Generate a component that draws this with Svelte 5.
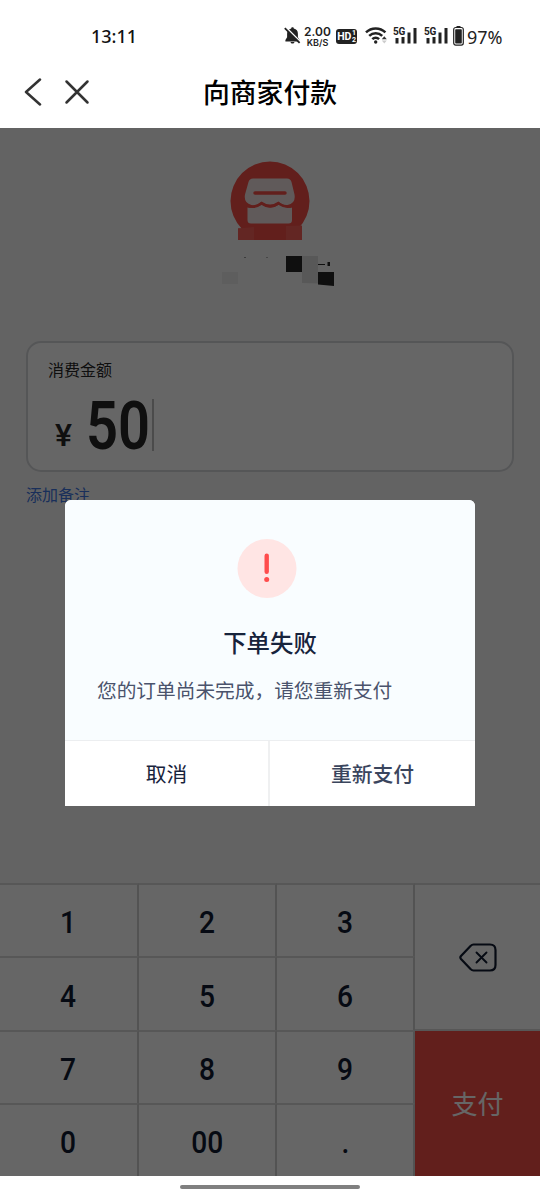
<script lang="ts">
	const keys = ['1', '2', '3', '4', '5', '6', '7', '8', '9', '0', '00', '.'];
	const networks = [1, 2];

	let amount = $state('50');
	let showDialog = $state(true);

	function press(key: string) {
		if (key === '.' && amount.includes('.')) return;
		amount += key;
	}

	function erase() {
		amount = amount.slice(0, -1);
	}
</script>

<div class="phone">
	<div class="status">
		<span class="time">13:11</span>
		<div class="indicators">
			<svg class="bell" width="17" height="19" viewBox="0 0 17 19">
				<path d="M8.5 1.2c.8 0 1.3.5 1.3 1.3 2.7.6 4.1 2.6 4.1 5.2v3.5l1.7 2.7v1.5H1.4v-1.5l1.7-2.7V7.7c0-2.6 1.4-4.6 4.1-5.2 0-.8.5-1.3 1.3-1.3zM6.5 16h4c-.3 1-1 1.6-2 1.6s-1.7-.6-2-1.6z" fill="#222" />
				<path d="M2 1.4l14.5 14.4" stroke="#fff" stroke-width="1.5" />
				<path d="M.8 2.2l14.8 14.7" stroke="#222" stroke-width="1.8" />
			</svg>
			<div class="speed">
				<span class="rate">2.00</span>
				<span class="unit">KB/S</span>
			</div>
			<div class="hd">
				<span>HD</span>
				<span class="sims"><i>1</i><i>2</i></span>
			</div>
			<svg class="wifi" width="23" height="19" viewBox="0 0 23 19">
				<g fill="none" stroke="#222" stroke-width="2.5">
					<path d="M1 6.4c5.4-5.2 14-5.2 19.4 0" />
					<path d="M4.2 9.9c3.7-3.5 9.3-3.5 13 0" />
					<path d="M7.3 13.2c2-1.9 4.8-1.9 6.8 0" />
				</g>
				<circle cx="10.7" cy="16" r="1.7" fill="#222" />
				<path d="M16.8 13.2l2.5-3 2.5 3z" fill="#333" />
				<path d="M16.8 14.5h5l-2.5 3z" fill="#ccc" />
			</svg>
			{#each networks as network (network)}
				<div class="signal">
					<svg width="25" height="19" viewBox="0 0 25 19">
						<path d="M2.5 12h3v5.5h-3zM8.5 11h3v6.5h-3zM14.5 6.5h3v11h-3zM20.5 2h3v15.5h-3z" fill="#222" />
					</svg>
					<span>5G</span>
				</div>
			{/each}
			<svg class="battery" width="11" height="20" viewBox="0 0 11 20">
				<path d="M3.5.5h4" stroke="#222" stroke-width="1.2" />
				<rect x=".7" y="1.5" width="9.6" height="17.6" rx="2" fill="none" stroke="#222" stroke-width="1.2" />
				<rect x="2.2" y="3.2" width="6.6" height="14.2" rx=".7" fill="#222" />
			</svg>
			<span class="percent">97%</span>
		</div>
	</div>

	<header>
		<button aria-label="返回">
			<svg width="18" height="28" viewBox="0 0 18 28">
				<path d="M16 1.5L2 14l14 12.5" />
			</svg>
		</button>
		<button aria-label="关闭">
			<svg width="26" height="26" viewBox="0 0 26 26">
				<path d="M2.5 2.5l21 21M23.5 2.5l-21 21" />
			</svg>
		</button>
		<h1>向商家付款</h1>
	</header>

	<main>
		<div class="merchant">
			<svg width="116" height="130" viewBox="0 0 116 130">
				<path d="M22 70.9A39.5 39.5 0 1 1 78 70.9z" fill="#f54e46" />
				<path d="M18 70.5h64V82H18z" fill="#f54e46" />
				<path d="M18 70.5l16-1.5v13H18zM66 68l16-.5V82H66z" fill="#f76058" />
				<path d="M33 20.5h34q3.5 0 4.5 3.5l3 12.5q1.500 9-7 10.500-5 .5-9-3.500-8.500 6-17 0-5 4.500-10 3.500-8-2-6.500-10.500l3.500-12.500Q29.500 20.500 33 20.500z" fill="#f0e2e2" />
				<path d="M27.500 49.500q7 1 14.500-3 8.500 6 17 0 6.500 4 13 3v12.500q0 3.500-3.500 3.500H31q-3.500 0-3.500-3.500z" fill="#f0e2e2" />
				<path d="M27 47.500q7 3.500 14.500-2 8.500 6 17 0 7.500 5 14 2" fill="none" stroke="#f54e46" stroke-width="2.500" />
				<path d="M35 35h30" stroke="#f54e46" stroke-width="3.500" stroke-linecap="round" />
				<path d="M2 114h16v12H2z" fill="#eaeaea" />
				<path d="M66 98h16v16H66z" fill="#262626" />
				<path d="M82 98h16v27.500l-16-.5z" fill="#dcdcdc" />
				<path d="M98 114h16v14L98 126.500z" fill="#262626" />
				<path d="M98 106h7v1h-7zM107.500 104h2.500v4h-2.500z" fill="#262626" />
				<path d="M24 99h2v1h-2zM46 99h2v.7h-2z" fill="#999" />
			</svg>
		</div>

		<section class="card">
			<label for="amount">消费金额</label>
			<div class="amount" id="amount">
				<span class="yen">¥</span>
				<span class="value">{amount}</span>
				<span class="caret"></span>
			</div>
		</section>
		<a class="remark" href="#remark">添加备注</a>

		<div class="keyboard">
			<div class="digits">
				{#each keys as key (key)}
					<button onclick={() => press(key)}><span>{key}</span></button>
				{/each}
			</div>
			<div class="actions">
				<button class="erase" aria-label="删除" onclick={erase}>
					<svg width="38" height="29" viewBox="0 0 38 29" fill="none" stroke="#101b30" stroke-linecap="round" stroke-linejoin="round">
						<path d="M14.5 1.5H31q5.500 0 5.500 5.500v15q0 5.500-5.500 5.500H14.500q-1.500 0-3-1.500L2 16q-1.300-1.500 0-3L11.500 3q1.500-1.500 3-1.500z" stroke-width="2.2" />
						<path d="M17.5 9.5l10 10M27.5 9.5l-10 10" stroke-width="1.9" />
					</svg>
				</button>
				<button class="pay" onclick={() => (showDialog = true)}>支付</button>
			</div>
		</div>

		{#if showDialog}
			<div class="mask">
				<div class="dialog" role="alertdialog">
					<div class="body">
						<svg width="60" height="60" viewBox="0 0 60 60">
							<circle cx="30" cy="30.5" r="29.5" fill="#ffe5e4" />
							<path d="M29.7 17.8v16" stroke="#ff4c4c" stroke-width="4.4" stroke-linecap="round" />
							<circle cx="29.7" cy="41.5" r="2.5" fill="#ff4c4c" />
						</svg>
						<h2>下单失败</h2>
						<p>您的订单尚未完成，请您重新支付</p>
					</div>
					<div class="buttons">
						<button onclick={() => (showDialog = false)}>取消</button>
						<button class="retry">重新支付</button>
					</div>
				</div>
			</div>
		{/if}
	</main>

	<footer><span></span></footer>
</div>

<style>
	:global(body) {
		margin: 0;
		background: #fff;
	}

	.phone {
		display: flex;
		flex-direction: column;
		width: 540px;
		height: 1200px;
		overflow: hidden;
		background: #fff;
		font-family: 'Noto Sans CJK SC', sans-serif;
	}

	button {
		padding: 0;
		border: 0;
		background: none;
		font: inherit;
		color: inherit;
	}

	svg {
		display: block;
		flex: none;
	}

	.status {
		display: flex;
		justify-content: space-between;
		box-sizing: border-box;
		height: 56px;
		padding: 26px 37px 0 91px;
		font-family: Inter, sans-serif;
		color: #222;
	}

	.time {
		font-family: 'Noto Sans', sans-serif;
		font-size: 18px;
		line-height: 20px;
		font-weight: 500;
		color: #111;
	}

	.indicators {
		display: flex;
		align-items: flex-start;
		white-space: nowrap;
	}

	.bell {
		margin-left: -1px;
	}

	.speed {
		display: flex;
		flex-direction: column;
		align-items: center;
		width: 27px;
		margin: 0 5px 0 3px;
		font-weight: 600;
	}

	.rate {
		font-size: 12px;
		line-height: 12px;
	}

	.unit {
		font-size: 9px;
		line-height: 9px;
	}

	.hd {
		display: flex;
		align-items: center;
		justify-content: center;
		gap: 1px;
		width: 21px;
		height: 15px;
		margin: 3px 8px 0 0;
		border-radius: 3px;
		background: #222;
		color: #fff;
		font-family: Roboto, sans-serif;
		font-size: 10.5px;
		font-weight: 700;
		letter-spacing: -0.3px;
	}

	.sims {
		display: flex;
		flex-direction: column;
		font-size: 7px;
		line-height: 6.5px;
	}

	.sims i {
		font-style: normal;
	}

	.signal {
		position: relative;
		width: 25px;
		margin-left: 6px;
	}

	.wifi {
		margin-right: -1px;
	}

	.signal span {
		position: absolute;
		top: 1px;
		left: 0;
		font-family: Roboto, sans-serif;
		font-size: 10px;
		line-height: 9px;
		font-weight: 700;
		letter-spacing: -0.3px;
	}

	.battery {
		margin: 0 3px 0 4px;
	}

	.percent {
		width: 36px;
		font-family: 'Noto Sans', sans-serif;
		font-size: 18px;
		line-height: 22px;
	}

	header {
		position: relative;
		display: flex;
		align-items: center;
		gap: 22px;
		height: 72px;
		padding-left: 24px;
	}

	header svg {
		fill: none;
		stroke: #333;
		stroke-width: 2.5;
		stroke-linecap: round;
		stroke-linejoin: round;
	}

	header button {
		margin-top: -1px;
	}

	h1 {
		position: absolute;
		inset: 0;
		margin: 0;
		text-align: center;
		font-size: 26.8px;
		line-height: 72px;
		font-weight: 500;
		color: #000;
		pointer-events: none;
	}

	main {
		position: relative;
		display: flex;
		flex-direction: column;
		height: 1048px;
		background: #f8f8f8;
	}

	.merchant {
		height: 183px;
		padding: 30px 0 0 220px;
	}

	.card {
		box-sizing: border-box;
		height: 131px;
		margin: 0 26px;
		padding: 15px 20px;
		border: 2px solid #d5d6da;
		border-radius: 15px;
		background: #fff;
		color: #262626;
	}

	.card label {
		display: block;
		font-size: 16px;
		line-height: 22px;
	}

	.amount {
		display: flex;
		font-family: Roboto, sans-serif;
		font-weight: 500;
	}

	.yen {
		width: 31px;
		padding-left: 7px;
		font-size: 32px;
		line-height: 110px;
		height: 90px;
	}

	.value {
		width: 66px;
		font-size: 66px;
		line-height: 93px;
		height: 90px;
		font-weight: 600;
		transform: scaleX(0.85);
		transform-origin: left;
	}

	.caret {
		width: 2px;
		height: 52px;
		margin-top: 19px;
		background: #bbb;
	}

	.remark {
		align-self: flex-start;
		margin: 10px 0 0 26px;
		font-size: 16px;
		line-height: 24px;
		color: #3f76e0;
		text-decoration: none;
	}

	.keyboard {
		display: flex;
		height: 293px;
		margin-top: auto;
		background: #fff;
		color: #101b30;
	}

	.digits {
		display: grid;
		grid-template-columns: 138.5px 138.5px 138px;
		grid-template-rows: 73px 74px 73px 73px;
		width: 415px;
	}

	.digits button {
		box-sizing: border-box;
		padding-top: 3px;
		border-top: 2px solid #d9d9d9;
		border-right: 2px solid #d0d0d0;
		font-family: Roboto, sans-serif;
		font-size: 32px;
		font-weight: 500;
	}

	.digits span {
		display: inline-block;
		transform: scaleX(0.88);
	}

	.actions {
		display: flex;
		flex-direction: column;
		flex: 1;
	}

	.erase {
		display: flex;
		align-items: center;
		justify-content: center;
		box-sizing: border-box;
		height: 148px;
		border-top: 2px solid #d9d9d9;
		border-bottom: 2px solid #d9d9d9;
	}

	.pay {
		flex: 1;
		background: #f54e46;
		color: #fff;
		font-size: 26px;
		padding-bottom: 2px;
	}

	.mask {
		position: absolute;
		inset: 0;
		display: flex;
		align-items: center;
		justify-content: center;
		background: rgba(0, 0, 0, 0.6);
	}

	.dialog {
		width: 410px;
		height: 306px;
		margin-top: 1px;
		border-radius: 6px 6px 0 0;
		background: #fff;
		overflow: hidden;
	}

	.body {
		box-sizing: border-box;
		height: 240px;
		padding-top: 38px;
		background: #f9fdff;
	}

	.body svg {
		margin-left: 172px;
	}

	h2 {
		margin: 27px 0 0;
		text-align: center;
		font-size: 23.4px;
		line-height: 34px;
		font-weight: 500;
		color: #17233c;
	}

	.body p {
		margin: 16px 0 0 32px;
		font-size: 19.7px;
		line-height: 30px;
		color: #4a536c;
	}

	.buttons {
		display: grid;
		grid-template-columns: 205px 1fr;
		height: 66px;
		border-top: 1px solid #eceef0;
		box-sizing: border-box;
	}

	.buttons button {
		padding-bottom: 1px;
		font-size: 20.8px;
		color: #17233c;
		border-right: 2px solid #eff0f1;
	}

	.buttons .retry {
		border-right: 0;
		font-weight: 500;
		color: #3a455d;
	}

	footer {
		display: flex;
		justify-content: center;
		height: 24px;
		background: #fff;
	}

	footer span {
		width: 180px;
		height: 4px;
		margin-top: 9px;
		border-radius: 2px;
		background: #808080;
	}
</style>
